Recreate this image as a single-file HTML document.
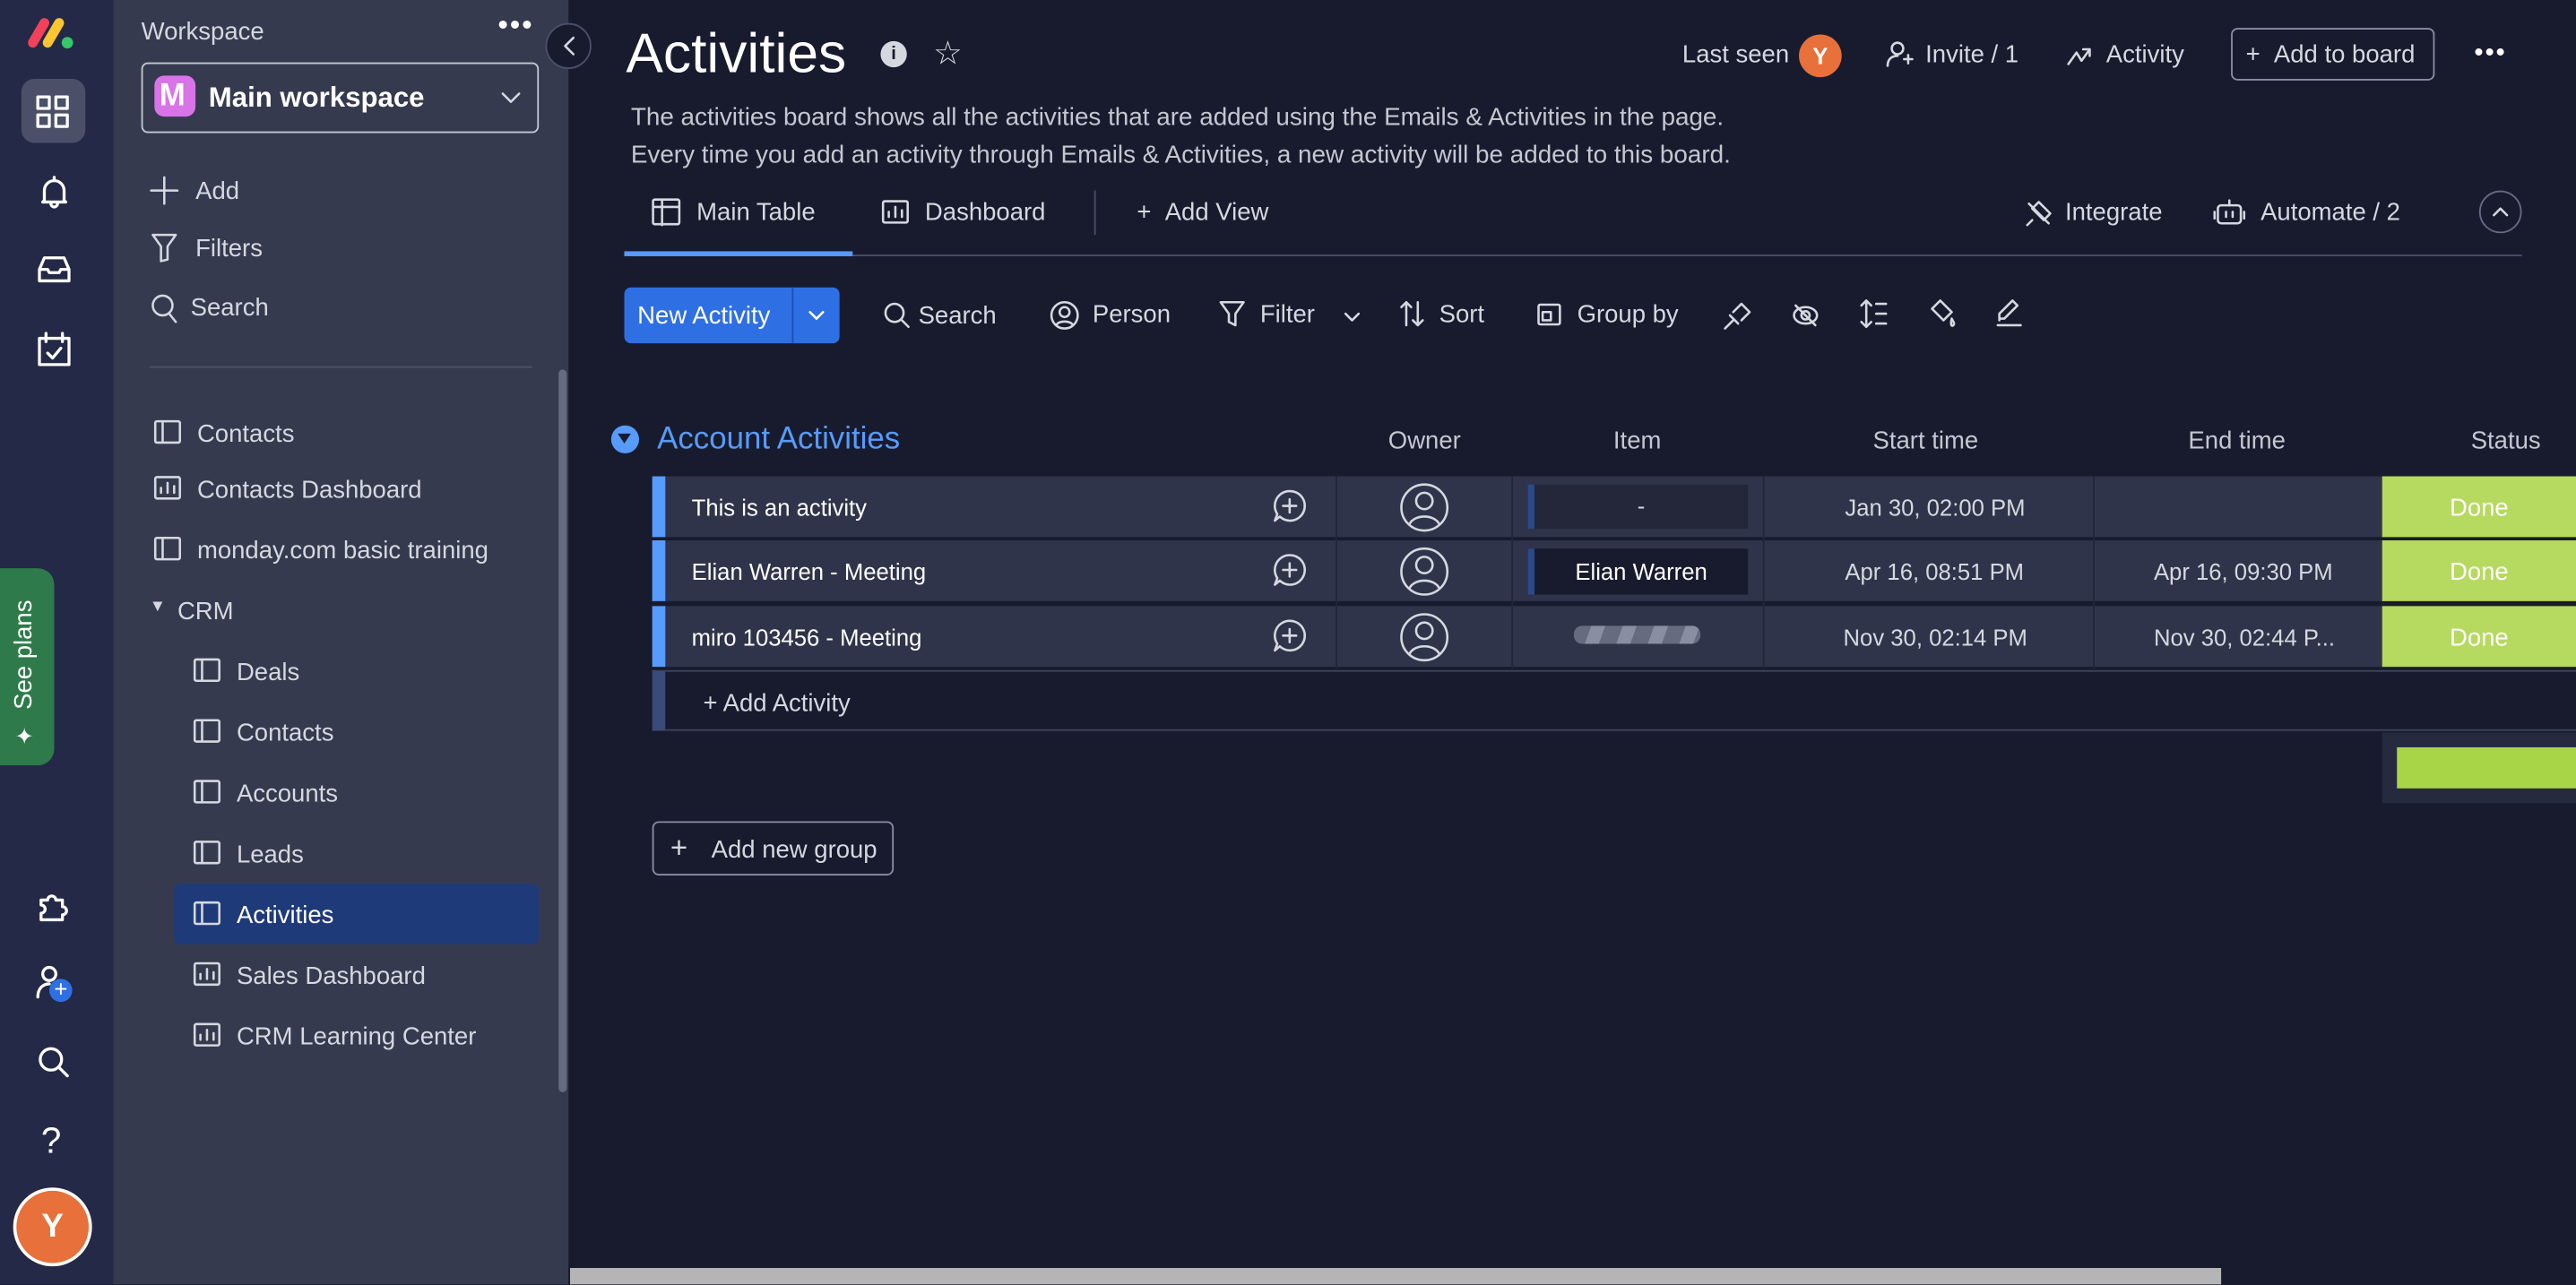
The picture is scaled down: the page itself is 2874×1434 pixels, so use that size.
<!DOCTYPE html>
<html><head><meta charset="utf-8">
<style>
html,body{margin:0;padding:0;width:2874px;height:1434px;overflow:hidden;background:#181b2e;}
#s{position:absolute;left:0;top:0;width:1568px;height:782px;transform:scale(1.83291);transform-origin:0 0;font-family:"Liberation Sans",sans-serif;color:#d5d8df;}
.a{position:absolute;white-space:nowrap;}
svg{position:absolute;overflow:visible;}
.ic{fill:none;stroke:#d5d8df;stroke-width:1.4;stroke-linecap:round;stroke-linejoin:round;}
.rail{stroke:#fff;stroke-width:1.8;}
.row{position:absolute;left:405px;width:1045px;height:37px;background:#30344a;}
.lb{position:absolute;left:397px;width:8px;height:37px;background:#579bfc;}
.st{position:absolute;left:1450px;width:118px;height:37px;background:#b6d95f;color:#fff;font-size:15px;text-align:center;line-height:39px;}
.sep{position:absolute;width:1px;background:#22263a;}
.t14{font-size:14px;}
.sb{font-size:15px;color:#d5d8df;}
</style></head><body><div id="s">
<div class="a" style="left:0;top:0;width:69px;height:782px;background:#232946;"></div>
<svg width="30" height="22" style="left:16px;top:9px"><g stroke-linecap="round" stroke-width="6"><line x1="4" y1="17" x2="11" y2="5" stroke="#f1415b"/><line x1="13" y1="17" x2="20" y2="5" stroke="#fdc631"/></g><circle cx="25" cy="17" r="3.5" fill="#35c76a"/></svg>
<div class="a" style="left:13px;top:48px;width:39px;height:39px;background:#4b5068;border-radius:8px"></div>
<svg width="20" height="20" style="left:22px;top:58px" class="ic rail"><rect x="1" y="1" width="7" height="7"/><rect x="12" y="1" width="7" height="7"/><rect x="1" y="12" width="7" height="7"/><rect x="12" y="12" width="7" height="7"/></svg>
<svg width="20" height="22" style="left:23px;top:106px" class="ic rail"><path d="M10 2v2M4 16V10a6 6 0 0 1 12 0v6l1 1H3z M8 18a2 2 0 0 0 4 0"/></svg>
<svg width="20" height="18" style="left:23px;top:155px" class="ic rail"><path d="M1 9l3-7h12l3 7v7H1z M1 9h5l1 2h6l1-2h5"/></svg>
<svg width="20" height="22" style="left:23px;top:202px" class="ic rail"><rect x="1" y="4" width="18" height="16"/><path d="M5 1v5M15 1v5M6 13l3 3 5-6"/></svg>
<svg width="22" height="22" style="left:22px;top:540px" class="ic rail"><path d="M3 8h4a2.5 2.5 0 1 1 5 0h4v4a2.5 2.5 0 1 1 0 5v3H3v-4a2.5 2.5 0 1 0 0-5z"/></svg>
<svg width="24" height="24" style="left:21px;top:586px" class="ic rail"><circle cx="9" cy="7" r="4"/><path d="M2 21c0-5 3-8 7-8"/></svg>
<div class="a" style="left:30px;top:596px;width:14px;height:14px;border-radius:50%;background:#2f6fe4;color:#fff;font-size:14px;line-height:13px;text-align:center">+</div>
<svg width="20" height="20" style="left:23px;top:637px" class="ic rail"><circle cx="8" cy="8" r="6.5"/><path d="M13 13l5 5"/></svg>
<div class="a" style="left:25px;top:682px;font-size:22px;color:#fff">?</div>
<div class="a" style="left:8px;top:723px;width:48px;height:48px;border-radius:50%;background:#e8703a;border:2px solid #fff;box-sizing:border-box;color:#fff;font-size:20px;font-weight:bold;text-align:center;line-height:44px">Y</div>
<div class="a" style="left:0;top:346px;width:33px;height:120px;background:#2f7a4a;border-radius:0 10px 10px 0"></div>
<div class="a" style="left:6px;top:432px;transform:rotate(-90deg);transform-origin:0 0;color:#fff;font-size:15px">See plans</div>
<div class="a" style="left:9px;top:440px;color:#fff;font-size:14px">✦</div>
<div class="a" style="left:69px;top:0;width:277px;height:782px;background:#363a4f"></div>
<div class="a sb" style="left:86px;top:11px">Workspace</div>
<div class="a" style="left:303px;top:5px;font-size:18px;color:#fff;letter-spacing:1px">•••</div>
<div class="a" style="left:86px;top:38px;width:240px;height:41px;border:1px solid #c5c7d0;border-radius:4px"></div>
<div class="a" style="left:94px;top:46px;width:25px;height:25px;background:#d974e8;border-radius:6px;color:#fff;font-size:19px;font-weight:bold;line-height:25px;padding-left:3px;box-sizing:border-box">M</div>
<div class="a" style="left:127px;top:50px;font-size:17px;font-weight:bold;color:#fff">Main workspace</div>
<svg width="12" height="8" style="left:305px;top:56px" class="ic"><path d="M1 1l5 5 5-5"/></svg>
<svg width="16" height="16" style="left:92px;top:108px" class="ic"><path d="M8 0v16M0 8h16"/></svg>
<div class="a sb" style="left:119px;top:108px">Add</div>
<svg width="16" height="18" style="left:92px;top:142px" class="ic"><path d="M1 1h14l-5 7v8l-4 1V8z"/></svg>
<div class="a sb" style="left:119px;top:143px">Filters</div>
<svg width="16" height="18" style="left:92px;top:179px" class="ic"><circle cx="7" cy="7" r="6"/><path d="M11 12l4 5"/></svg>
<div class="a sb" style="left:116px;top:179px">Search</div>
<div class="a" style="left:91px;top:223px;width:233px;height:1px;background:#4b5068"></div>
<div class="a" style="left:340px;top:225px;width:5px;height:440px;background:#676b80;border-radius:3px"></div>
<div class="a" style="left:346px;top:14px;width:28px;height:28px;margin-left:-14px;border-radius:50%;background:#181b2e;border:1px solid #4b5068;box-sizing:border-box"></div>
<svg width="8" height="12" style="left:343px;top:22px" class="ic"><path d="M6 1L1 6l5 5"/></svg>
<div style="font-size:15px">
<svg width="16" height="14" style="left:94px;top:256px" class="ic"><rect x="0.5" y="0.5" width="15" height="13" rx="1"/><path d="M5 1v12"/></svg><div class="a" style="left:120px;top:256px">Contacts</div>
<svg width="16" height="14" style="left:94px;top:290px" class="ic"><rect x="0.5" y="0.5" width="15" height="13" rx="1"/><path d="M4 10V7M8 10V4M12 10V6"/></svg><div class="a" style="left:120px;top:290px">Contacts Dashboard</div>
<svg width="16" height="14" style="left:94px;top:327px" class="ic"><rect x="0.5" y="0.5" width="15" height="13" rx="1"/><path d="M5 1v12"/></svg><div class="a" style="left:120px;top:327px">monday.com basic training</div>
<div class="a" style="left:91px;top:364px;font-size:10px">▼</div><div class="a" style="left:108px;top:364px">CRM</div>
<div class="a" style="left:106px;top:538px;width:222px;height:37px;background:#1f3a78;border-radius:4px"></div>
<svg width="16" height="14" style="left:118px;top:401px" class="ic"><rect x="0.5" y="0.5" width="15" height="13" rx="1"/><path d="M5 1v12"/></svg><div class="a" style="left:144px;top:401px">Deals</div>
<svg width="16" height="14" style="left:118px;top:438px" class="ic"><rect x="0.5" y="0.5" width="15" height="13" rx="1"/><path d="M5 1v12"/></svg><div class="a" style="left:144px;top:438px">Contacts</div>
<svg width="16" height="14" style="left:118px;top:475px" class="ic"><rect x="0.5" y="0.5" width="15" height="13" rx="1"/><path d="M5 1v12"/></svg><div class="a" style="left:144px;top:475px">Accounts</div>
<svg width="16" height="14" style="left:118px;top:512px" class="ic"><rect x="0.5" y="0.5" width="15" height="13" rx="1"/><path d="M5 1v12"/></svg><div class="a" style="left:144px;top:512px">Leads</div>
<svg width="16" height="14" style="left:118px;top:549px" class="ic"><rect x="0.5" y="0.5" width="15" height="13" rx="1"/><path d="M5 1v12"/></svg><div class="a" style="left:144px;top:549px;color:#fff">Activities</div>
<svg width="16" height="14" style="left:118px;top:586px" class="ic"><rect x="0.5" y="0.5" width="15" height="13" rx="1"/><path d="M4 10V7M8 10V4M12 10V6"/></svg><div class="a" style="left:144px;top:586px">Sales Dashboard</div>
<svg width="16" height="14" style="left:118px;top:623px" class="ic"><rect x="0.5" y="0.5" width="15" height="13" rx="1"/><path d="M4 10V7M8 10V4M12 10V6"/></svg><div class="a" style="left:144px;top:623px">CRM Learning Center</div>
</div>
<div class="a" style="left:381px;top:14px;font-size:34px;color:#fff;font-weight:500">Activities</div>
<div class="a" style="left:536px;top:25px;width:16px;height:16px;border-radius:50%;background:#d5d8df;color:#181b2e;font-size:11px;font-weight:bold;text-align:center;line-height:16px">i</div>
<div class="a" style="left:568px;top:20px;font-size:20px">☆</div>
<div class="a sb" style="left:1024px;top:25px">Last seen</div>
<div class="a" style="left:1095px;top:21px;width:26px;height:26px;border-radius:50%;background:#e8703a;color:#fff;font-size:14px;font-weight:bold;text-align:center;line-height:26px">Y</div>
<svg width="16" height="16" style="left:1148px;top:25px" class="ic"><circle cx="7" cy="4.5" r="3.5"/><path d="M1 15c0-4 2.5-6 6-6M11 11h5M13.5 8.5v5"/></svg>
<div class="a sb" style="left:1172px;top:25px">Invite / 1</div>
<svg width="16" height="12" style="left:1258px;top:28px" class="ic"><path d="M1 11l5-7 3 5 5-7M10 2h4v4"/></svg>
<div class="a sb" style="left:1282px;top:25px">Activity</div>
<div class="a" style="left:1358px;top:17px;width:124px;height:32px;border:1px solid #8a8ea3;border-radius:4px;box-sizing:border-box"></div>
<div class="a sb" style="left:1367px;top:25px">+ &nbsp;Add to board</div>
<div class="a" style="left:1506px;top:24px;font-size:16px;color:#fff;letter-spacing:1px">•••</div>
<div class="a" style="left:384px;top:60px;font-size:15.2px;color:#c5c7d0;line-height:23px">The activities board shows all the activities that are added using the Emails &amp; Activities in the page.<br>Every time you add an activity through Emails &amp; Activities, a new activity will be added to this board.</div>
<svg width="20" height="18" style="left:397px;top:121px" class="ic"><rect x="0.5" y="0.5" width="16" height="15" rx="1"/><path d="M1 5h15M6 1v15"/></svg>
<div class="a sb" style="left:424px;top:121px">Main Table</div>
<svg width="16" height="14" style="left:537px;top:122px" class="ic"><rect x="0.5" y="0.5" width="15" height="13" rx="1"/><path d="M4 10V7M8 10V4M12 10V6"/></svg>
<div class="a sb" style="left:563px;top:121px">Dashboard</div>
<div class="a" style="left:666px;top:116px;width:1px;height:27px;background:#4b5068"></div>
<div class="a sb" style="left:692px;top:121px">+ &nbsp;Add View</div>
<svg width="18" height="18" style="left:1232px;top:121px" class="ic"><path d="M3 3l12 12M5 6l4-4 7 7-4 4z M2 16l3-3"/></svg>
<div class="a sb" style="left:1257px;top:121px">Integrate</div>
<svg width="20" height="16" style="left:1347px;top:122px" class="ic"><rect x="3" y="3" width="14" height="11" rx="2"/><path d="M10 0v3M1 7v4M19 7v4M8 7v3M12 7v3"/></svg>
<div class="a sb" style="left:1376px;top:121px">Automate / 2</div>
<div class="a" style="left:1509px;top:116px;width:26px;height:26px;border-radius:50%;border:1px solid #676b80;box-sizing:border-box"></div>
<svg width="10" height="6" style="left:1517px;top:126px" class="ic"><path d="M1 5l4-4 4 4"/></svg>
<div class="a" style="left:380px;top:155px;width:1155px;height:1px;background:#4b5068"></div>
<div class="a" style="left:380px;top:153px;width:139px;height:3px;background:#579bfc"></div>
<div class="a" style="left:380px;top:175px;width:131px;height:34px;background:#2f6fe4;border-radius:4px"></div>
<div class="a" style="left:482px;top:175px;width:1px;height:34px;background:#1b4fb5"></div>
<div class="a" style="left:388px;top:184px;font-size:15px;color:#fff">New Activity</div>
<svg width="10" height="6" style="left:492px;top:189px" class="ic"><path d="M1 1l4 4 4-4" stroke="#fff"/></svg>
<svg width="16" height="16" style="left:538px;top:184px" class="ic"><circle cx="6.5" cy="6.5" r="5.5"/><path d="M10.5 10.5l4.5 4.5"/></svg>
<div class="a sb" style="left:559px;top:184px">Search</div>
<svg width="18" height="18" style="left:639px;top:183px" class="ic"><circle cx="9" cy="9" r="8"/><circle cx="9" cy="7" r="3"/><path d="M4 15c1-3 9-3 10 0"/></svg>
<div class="a sb" style="left:665px;top:183px">Person</div>
<svg width="16" height="16" style="left:742px;top:183px" class="ic"><path d="M1 1h14l-5 7v7l-4-2V8z"/></svg>
<div class="a sb" style="left:767px;top:183px">Filter</div>
<svg width="10" height="6" style="left:818px;top:190px" class="ic"><path d="M1 1l4 4 4-4"/></svg>
<svg width="16" height="16" style="left:852px;top:183px" class="ic"><path d="M4 15V1M1 4l3-3 3 3M11 1v14M8 12l3 3 3-3"/></svg>
<div class="a sb" style="left:876px;top:183px">Sort</div>
<svg width="14" height="14" style="left:936px;top:185px" class="ic"><rect x="0.5" y="0.5" width="13" height="12" rx="1"/><rect x="3" y="5" width="5" height="5"/></svg>
<div class="a sb" style="left:960px;top:183px">Group by</div>
<svg width="18" height="18" style="left:1049px;top:183px" class="ic"><path d="M1 17l5-5M4 9l5 5M6 7l5-5 5 5-5 5"/></svg>
<svg width="18" height="16" style="left:1090px;top:184px" class="ic"><ellipse cx="9" cy="8" rx="7" ry="5"/><circle cx="9" cy="8" r="2.5"/><path d="M3 2l12 12"/></svg>
<svg width="18" height="18" style="left:1132px;top:182px" class="ic"><path d="M4 1v16M1 4l3-3 3 3M1 14l3 3 3-3M10 3h6M10 9h6M10 15h6"/></svg>
<svg width="18" height="18" style="left:1173px;top:182px" class="ic"><path d="M3 6l5-5 7 7-5 5z M15 12c1 2 2 3 1 4s-2 0-1-4"/></svg>
<svg width="18" height="18" style="left:1214px;top:182px" class="ic"><path d="M2 16h14M3 13v-4l8-8 3 3-8 8H3"/></svg>
<div class="a" style="left:372px;top:259px;width:17px;height:17px;border-radius:50%;background:#579bfc"></div>
<div class="a" style="left:376px;top:264px;width:0;height:0;border-left:4.5px solid transparent;border-right:4.5px solid transparent;border-top:6px solid #181b2e"></div>
<div class="a" style="left:400px;top:257px;font-size:19px;color:#579bfc">Account Activities</div>
<div class="a sb" style="left:845px;top:260px;color:#c5c7d0">Owner</div>
<div class="a sb" style="left:982px;top:260px;color:#c5c7d0">Item</div>
<div class="a sb" style="left:1140px;top:260px;color:#c5c7d0">Start time</div>
<div class="a sb" style="left:1332px;top:260px;color:#c5c7d0">End time</div>
<div class="a sb" style="left:1504px;top:260px;color:#c5c7d0">Status</div>
<div class="row" style="top:290px"></div><div class="lb" style="top:290px"></div><div class="st" style="top:290px">Done</div>
<div class="row" style="top:329px"></div><div class="lb" style="top:329px"></div><div class="st" style="top:329px">Done</div>
<div class="row" style="top:369px"></div><div class="lb" style="top:369px"></div><div class="st" style="top:369px">Done</div>
<div class="sep" style="left:813px;top:290px;height:117px"></div>
<div class="sep" style="left:920px;top:290px;height:117px"></div>
<div class="sep" style="left:1073px;top:290px;height:117px"></div>
<div class="sep" style="left:1274px;top:290px;height:117px"></div>
<div class="a t14" style="left:421px;top:301px;color:#fff">This is an activity</div>
<div class="a t14" style="left:421px;top:340px;color:#fff">Elian Warren - Meeting</div>
<div class="a t14" style="left:421px;top:380px;color:#fff">miro 103456 - Meeting</div>
<svg width="20" height="20" style="left:775px;top:298px" class="ic"><path d="M10 1a9 9 0 1 1-6 15.5L1 19l1.5-4A9 9 0 0 1 10 1zM10 6v8M6 10h8"/></svg>
<svg width="20" height="20" style="left:775px;top:337px" class="ic"><path d="M10 1a9 9 0 1 1-6 15.5L1 19l1.5-4A9 9 0 0 1 10 1zM10 6v8M6 10h8"/></svg>
<svg width="20" height="20" style="left:775px;top:377px" class="ic"><path d="M10 1a9 9 0 1 1-6 15.5L1 19l1.5-4A9 9 0 0 1 10 1zM10 6v8M6 10h8"/></svg>
<svg width="30" height="30" style="left:852px;top:294px" class="ic"><circle cx="15" cy="15" r="14"/><circle cx="15" cy="11" r="5"/><path d="M6 25c3-6 15-6 18 0"/></svg>
<svg width="30" height="30" style="left:852px;top:333px" class="ic"><circle cx="15" cy="15" r="14"/><circle cx="15" cy="11" r="5"/><path d="M6 25c3-6 15-6 18 0"/></svg>
<svg width="30" height="30" style="left:852px;top:373px" class="ic"><circle cx="15" cy="15" r="14"/><circle cx="15" cy="11" r="5"/><path d="M6 25c3-6 15-6 18 0"/></svg>
<div class="a" style="left:930px;top:295px;width:134px;height:27px;background:#232739;border-left:4px solid #2a4a8a;box-sizing:border-box;text-align:center;font-size:14px;line-height:27px">-</div>
<div class="a" style="left:930px;top:334px;width:134px;height:28px;background:#181b2e;border-left:4px solid #2a4a8a;box-sizing:border-box;text-align:center;font-size:14px;line-height:28px;color:#fff">Elian Warren</div>
<div class="a" style="left:958px;top:381px;width:77px;height:11px;border-radius:5px;background:repeating-linear-gradient(110deg,#676b80 0 10px,#8a8ea3 10px 18px)"></div>
<div class="a t14" style="left:1123px;top:301px">Jan 30, 02:00 PM</div>
<div class="a t14" style="left:1123px;top:340px">Apr 16, 08:51 PM</div>
<div class="a t14" style="left:1311px;top:340px">Apr 16, 09:30 PM</div>
<div class="a t14" style="left:1122px;top:380px">Nov 30, 02:14 PM</div>
<div class="a t14" style="left:1311px;top:380px">Nov 30, 02:44 P...</div>
<div class="a" style="left:397px;top:408px;width:1171px;height:37px;border-top:1px solid #40445a;border-bottom:1px solid #40445a;border-left:8px solid #3b4a78;box-sizing:border-box"></div>
<div class="a sb" style="left:428px;top:420px">+ Add Activity</div>
<div class="a" style="left:1450px;top:446px;width:118px;height:43px;background:#262a3e"></div>
<div class="a" style="left:1459px;top:455px;width:109px;height:25px;background:#a8d448"></div>
<div class="a" style="left:397px;top:500px;width:147px;height:33px;border:1px solid #8a8ea3;border-radius:4px;box-sizing:border-box"></div>
<div class="a sb" style="left:408px;top:507px;font-size:18px;line-height:18px">+</div>
<div class="a sb" style="left:433px;top:509px">Add new group</div>
<div class="a" style="left:347px;top:772px;width:1005px;height:10px;background:#b5b5b5"></div>
</div></body></html>
